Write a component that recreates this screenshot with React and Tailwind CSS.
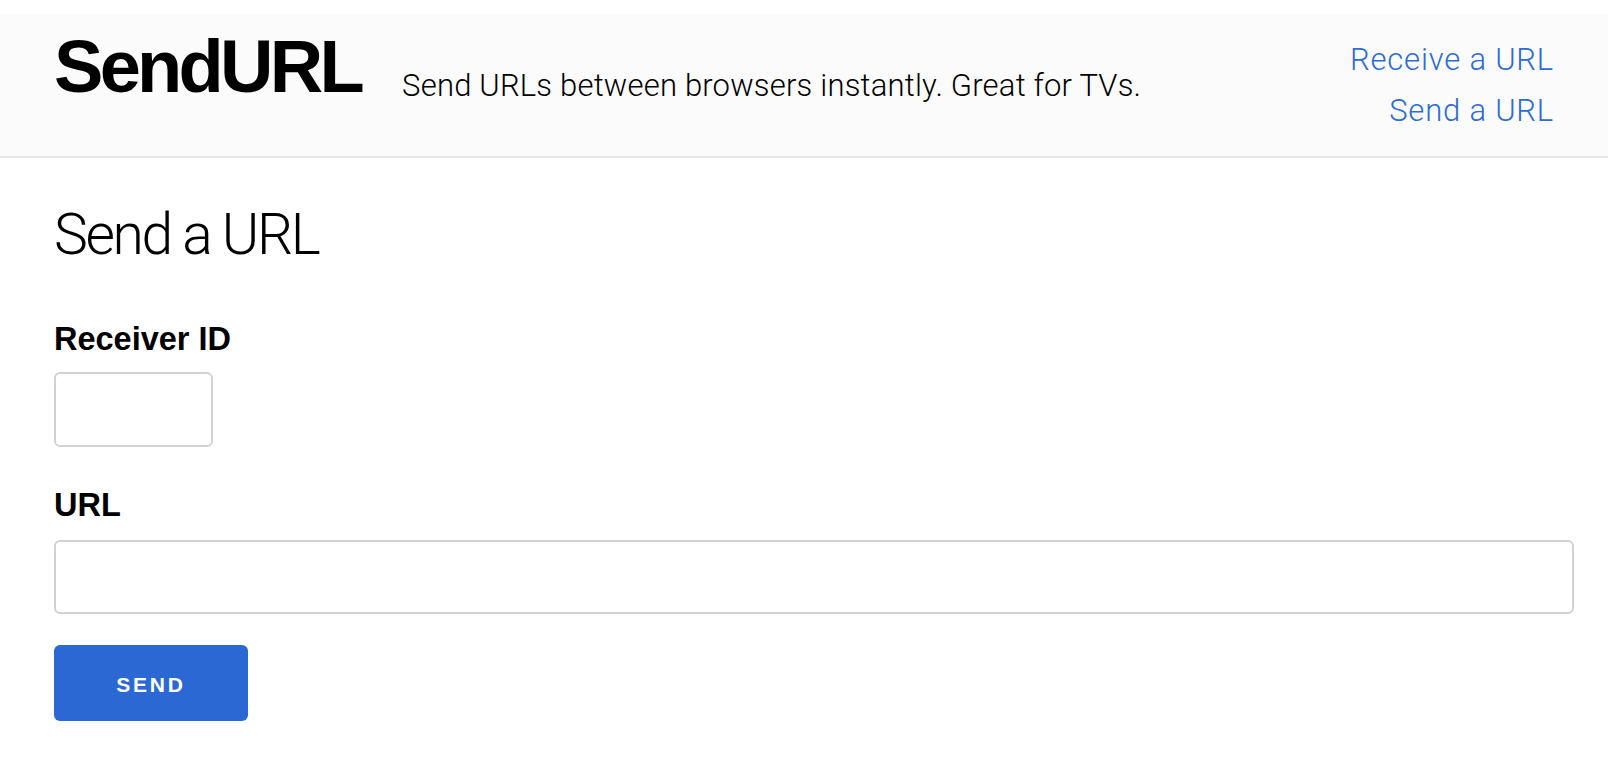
import React from 'react';

export default function App() {
  return (
    <div className="min-h-screen bg-white pt-[14px] text-black">
      {/* Header */}
      <header className="h-[144px] bg-[#fbfbfb] border-b-2 border-[#e7e7e7] px-[54px] flex items-start justify-between">
        <div className="flex items-start">
          <span className="mt-[16px] font-['Liberation_Sans',Arial,sans-serif] font-bold text-[74px] leading-none tracking-[-3.7px]">
            SendURL
          </span>
          <span className="mt-[56px] ml-[41px] font-['Roboto',sans-serif] font-light text-[31px] leading-none tracking-[0.2px]">
            Send URLs between browsers instantly. Great for TVs.
          </span>
        </div>
        <nav className="mt-[20px] flex flex-col items-end font-['Roboto',sans-serif] font-light text-[31px] leading-[51px] tracking-[0.8px] text-[#2d6bd6]">
          <a href="#">Receive a URL</a>
          <a href="#">Send a URL</a>
        </nav>
      </header>

      {/* Form */}
      <main className="pl-[54px] pr-[34px] flex flex-col items-start">
        <h1 className="mt-[48px] font-['Roboto',sans-serif] font-light text-[57px] leading-none tracking-[-2.4px]">
          Send a URL
        </h1>

        <label className="mt-[60px] font-['Liberation_Sans',Arial,sans-serif] font-bold text-[32.5px] leading-none">
          Receiver ID
        </label>
        <input
          type="text"
          className="mt-[16px] h-[75px] w-[159px] rounded-md border-2 border-[#d2d2d2] bg-white px-3 outline-none"
        />

        <label className="mt-[42px] font-['Liberation_Sans',Arial,sans-serif] font-bold text-[32.5px] leading-none">
          URL
        </label>
        <input
          type="text"
          className="mt-[19px] h-[74px] w-full rounded-md border-2 border-[#d2d2d2] bg-white px-3 outline-none"
        />

        <button className="mt-[31px] h-[76px] w-[194px] rounded-md bg-[#2b68d3] pt-[3px] text-white font-['Liberation_Sans',Arial,sans-serif] font-bold text-[21px] tracking-[2.8px]">
          SEND
        </button>
      </main>
    </div>
  );
}
